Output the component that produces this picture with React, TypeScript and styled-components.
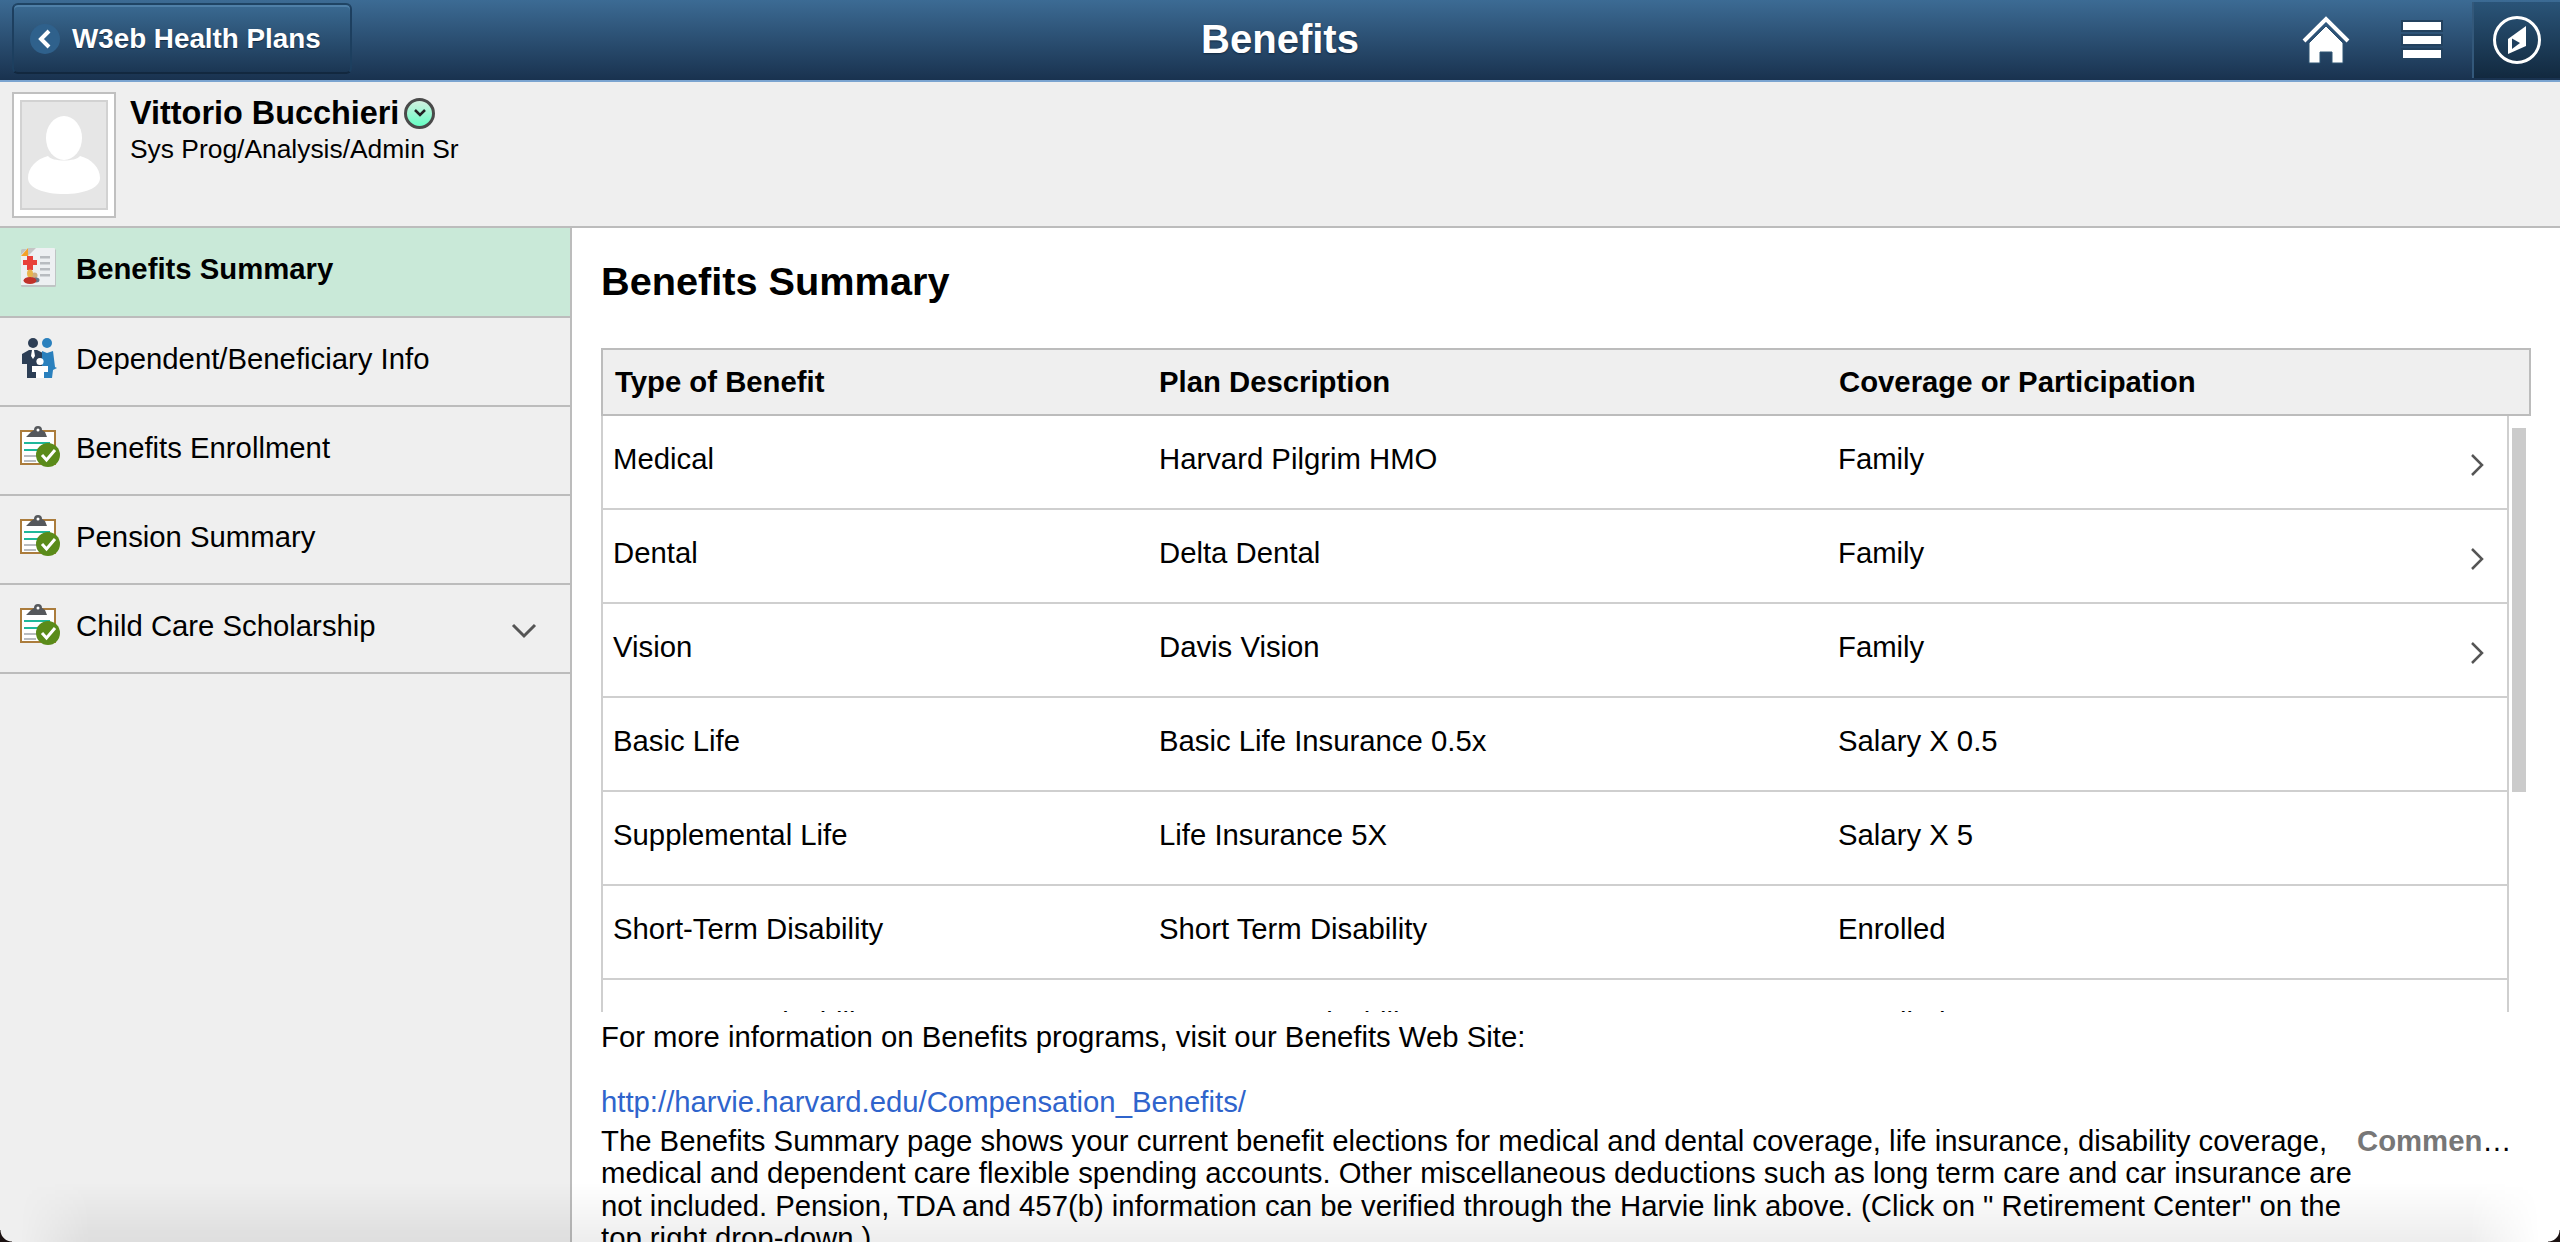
import React from "react";
import styled, { createGlobalStyle } from "styled-components";

const Global = createGlobalStyle`
  html, body { margin: 0; padding: 0; background: #fff; }
  body { font-family: "Liberation Sans", Arial, sans-serif; color: #000; }
`;

const Page = styled.div`
  position: relative;
  width: 2560px;
  height: 1242px;
  overflow: hidden;
  display: flex;
  flex-direction: column;
  background: #fff;
`;

const Header = styled.header`
  flex: none;
  height: 80px;
  border-bottom: 2px solid #7ba4d0;
  background: linear-gradient(#3c6b94, #19324f);
  display: grid;
  grid-template-columns: 1fr auto 1fr;
  align-items: stretch;
`;

const HeaderLeft = styled.div`
  display: flex;
  align-items: flex-start;
  padding: 3px 0 0 12px;
`;

const BackButton = styled.button`
  width: 340px;
  height: 71px;
  box-sizing: border-box;
  padding: 0 0 0 16px;
  display: flex;
  align-items: center;
  gap: 12px;
  border: 2px solid #1d3f5f;
  border-top-color: #1f4464;
  border-bottom-color: #12283f;
  border-radius: 6px;
  box-shadow: inset 0 2px 0 #4f80a8;
  background: linear-gradient(#3a6a92, #1b3653);
  color: #fff;
  font: bold 27.8px "Liberation Sans", Arial, sans-serif;
  text-shadow: 0 1px 1px #12283f;
`;

const BackCircle = styled.span`
  width: 30px;
  height: 30px;
  border-radius: 50%;
  background: #2f618c;
  display: flex;
  align-items: center;
  justify-content: center;
`;

const Title = styled.h1`
  margin: 0;
  align-self: center;
  position: relative;
  top: -1px;
  color: #fff;
  font-size: 40px;
  font-weight: bold;
  text-shadow: 0 1px 2px #12283f;
`;

const HeaderRight = styled.div`
  display: flex;
  justify-content: flex-end;
  align-items: stretch;
`;

const IconSlot = styled.div<{ $w: number; $mr: number }>`
  width: ${(p) => p.$w}px;
  margin-right: ${(p) => p.$mr}px;
  display: flex;
  align-items: center;
  justify-content: center;
`;

const HamburgerBox = styled.div`
  display: flex;
  flex-direction: column;
  gap: 6px;
`;

const Bar = styled.span`
  display: block;
  width: 38px;
  height: 8px;
  background: #fff;
  outline: 2px solid #23425f;
`;

const NavPanel = styled.div`
  width: 86px;
  margin: 2px 0;
  border-left: 2px solid #33587a;
  background: linear-gradient(#2a5478, #12293f);
  display: flex;
  align-items: center;
  justify-content: center;
`;

const Profile = styled.section`
  flex: none;
  height: 144px;
  border-bottom: 2px solid #bcbcbc;
  background: #efefef;
  box-sizing: content-box;
  display: flex;
  align-items: flex-start;
  padding: 0 0 0 12px;
  gap: 14px;
`;

const PhotoFrame = styled.div`
  margin-top: 10px;
  width: 104px;
  height: 126px;
  box-sizing: border-box;
  border: 2px solid #c0c0c0;
  background: #fff;
  padding: 6px;
`;

const PhotoInner = styled.div`
  width: 100%;
  height: 100%;
  box-sizing: border-box;
  border: 2px solid #d2d2d2;
  background: #e6e6e6;
  display: flex;
  align-items: center;
  justify-content: center;
`;

const ProfileText = styled.div`
  margin-top: 11px;
`;

const NameRow = styled.div`
  display: flex;
  align-items: center;
  gap: 5px;
  height: 40px;
`;

const Name = styled.span`
  font-size: 32.4px;
  font-weight: bold;
`;

const NameToggle = styled.span`
  width: 31px;
  height: 31px;
  box-sizing: border-box;
  border-radius: 50%;
  border: 3px solid #4a4a4a;
  background: linear-gradient(#d2f0e0, #66ffc4);
  display: flex;
  align-items: center;
  justify-content: center;
`;

const JobTitle = styled.div`
  font-size: 26.4px;
  line-height: 32px;
`;

const Body = styled.div`
  flex: 1;
  display: flex;
  min-height: 0;
`;

const Sidebar = styled.nav`
  flex: none;
  width: 570px;
  border-right: 2px solid #bcbcbc;
  background: #efefef;
`;

const NavItem = styled.div<{ $active?: boolean }>`
  height: ${(p) => (p.$active ? 90 : 89)}px;
  box-sizing: border-box;
  border-bottom: 2px solid #bcbcbc;
  background: ${(p) => (p.$active ? "#c9e9d8" : "#efefef")};
  font-size: 29.3px;
  font-weight: ${(p) => (p.$active ? "bold" : "normal")};
  display: flex;
  align-items: center;
  padding: 0 0 6px 10px;
`;

const NavIcon = styled.svg<{ $top?: number }>`
  flex: none;
  width: 60px;
  height: 60px;
  align-self: flex-start;
  margin: ${(p) => p.$top ?? 12}px 6px 0 0;
`;

const NavLabel = styled.span`
  flex: 1;
`;

const NavChevron = styled.svg`
  flex: none;
  width: 26px;
  height: 16px;
  margin: 10px 33px 0 0;
`;

const Main = styled.main`
  flex: 1;
  min-width: 0;
  padding-left: 29px;
  display: flex;
  flex-direction: column;
`;

const PageTitle = styled.h2`
  flex: none;
  height: 120px;
  margin: 0;
  box-sizing: border-box;
  padding-top: 30px;
  font-size: 39.7px;
  line-height: 46px;
  font-weight: bold;
`;

const TableArea = styled.div`
  flex: none;
  position: relative;
  height: 664px;
  overflow: hidden;
`;

const TableHead = styled.div`
  width: 1930px;
  height: 68px;
  box-sizing: border-box;
  border: 2px solid #bcbcbc;
  background: #efefef;
  display: grid;
  grid-template-columns: 544px 680px 1fr;
  align-items: center;
  padding-left: 12px;
  font-size: 29.3px;
  font-weight: bold;
`;

const TableBodyBox = styled.div`
  width: 1908px;
  box-sizing: border-box;
  border-left: 2px solid #cfcfcf;
  border-right: 2px solid #cfcfcf;
`;

const Row = styled.div`
  height: 94px;
  box-sizing: border-box;
  border-bottom: 2px solid #cfcfcf;
  display: grid;
  grid-template-columns: 546px 679px 1fr 60px;
  padding-left: 10px;
  font-size: 29.3px;
`;

const Cell = styled.div`
  padding-top: 25px;
  line-height: 36px;
`;

const RowChevron = styled.svg`
  width: 14px;
  height: 24px;
  margin: 37px 0 0 23px;
`;

const ScrollThumb = styled.div`
  position: absolute;
  top: 80px;
  left: 1911px;
  width: 14px;
  height: 364px;
  background: #cbcbcb;
`;

const Footer = styled.div`
  flex: none;
  font-size: 29.3px;
`;

const InfoLine = styled.div`
  height: 40px;
  line-height: 50px;
`;

const LinkLine = styled.a`
  display: block;
  margin-top: 29px;
  height: 41px;
  line-height: 42px;
  color: #2f64cc;
  text-decoration: none;
`;

const DescRow = styled.div`
  display: flex;
  align-items: flex-start;
  margin-top: 3px;
`;

const Description = styled.p`
  flex: none;
  width: 1756px;
  margin: 0;
  line-height: 32.3px;
`;

const CommentTag = styled.div`
  line-height: 32px;
  white-space: nowrap;
`;

const CommentWord = styled.span`
  color: #777;
  font-weight: bold;
`;

const BottomShade = styled.div`
  position: absolute;
  left: 0;
  right: 0;
  bottom: 0;
  height: 60px;
  pointer-events: none;
  background: linear-gradient(rgba(0, 0, 0, 0), rgba(0, 0, 0, 0.07));
  -webkit-mask-image: linear-gradient(90deg, transparent 20px, #000 90px, #000 calc(100% - 90px), transparent calc(100% - 20px));
  mask-image: linear-gradient(90deg, transparent 20px, #000 90px, #000 calc(100% - 90px), transparent calc(100% - 20px));
`;

const Corner = styled.div<{ $right?: boolean }>`
  position: absolute;
  bottom: 0;
  ${(p) => (p.$right ? "right: 0;" : "left: 0;")}
  width: 12px;
  height: 12px;
  pointer-events: none;
  background: radial-gradient(
    circle at ${(p) => (p.$right ? "0 0" : "100% 0")},
    transparent 11px,
    #1b1212 12px
  );
`;

const SummaryIcon = () => (
  <NavIcon viewBox="0 0 60 60">
    <rect x="11" y="9" width="35" height="38" rx="1.5" fill="#bfc4c4" />
    <path d="M18 8H44a1 1 0 0 1 1 1V45H11V15Z" fill="#edf0f2" />
    <path d="M11 16L18 8V16Z" fill="#f2a229" />
    <path d="M18 8L26 8L18 16Z" fill="#c5c5c5" />
    <path d="M17 16h6v4h4v5h-4v5h-6v-5h-4v-5h4z" fill="#e8403a" />
    <rect x="30" y="16" width="10" height="2.5" fill="#b8bcc0" />
    <rect x="30" y="22" width="10" height="2.5" fill="#b8bcc0" />
    <rect x="30" y="28" width="10" height="2.5" fill="#b8bcc0" />
    <rect x="30" y="34" width="10" height="2.5" fill="#b8bcc0" />
    <circle cx="24.5" cy="35.5" r="3" fill="#cfae80" />
    <ellipse cx="26" cy="40" rx="3.5" ry="2.5" fill="#64788c" />
    <ellipse cx="20" cy="33.5" rx="3" ry="4" fill="#e8b44c" />
    <ellipse cx="20" cy="40.5" rx="6.5" ry="3.5" fill="#c0322a" />
  </NavIcon>
);

const FamilyIcon = () => (
  <NavIcon viewBox="0 0 60 60">
    <circle cx="23" cy="13" r="5" fill="#2c3e55" />
    <circle cx="37" cy="13" r="5" fill="#2a80bd" />
    <path d="M12 24l7-4h8l6 3v25H17V34h-5Z" fill="#2c3e55" />
    <path d="M22 20h2l1 6-2 3-2-3Z" fill="#fff" />
    <path d="M32 21l5 2 6-2 2 16 2 1-4 2-1 8H32Z" fill="#2a80bd" />
    <circle cx="30" cy="31.5" r="3.6" fill="#fff" />
    <path d="M22 36h16v6h-4v6h-8v-6h-4Z" fill="#fff" />
  </NavIcon>
);

const EnrollIcon = () => (
  <NavIcon viewBox="0 0 60 60" $top={14}>
    <rect x="11" y="10" width="34" height="33" fill="#fff" stroke="#ab7c3c" strokeWidth="2" />
    <path d="M21 11l3-2a4 4 0 0 1 8 0l3 2 2 5H16Z" fill="#55585c" />
    <circle cx="28" cy="9" r="1.5" fill="#fff" />
    <rect x="14" y="21" width="26" height="2" fill="#1fb89a" />
    <rect x="14" y="28" width="18" height="2" fill="#1fb89a" />
    <rect x="14" y="34" width="14" height="2" fill="#b8bcc0" />
    <rect x="14" y="39" width="12" height="2" fill="#b8bcc0" />
    <circle cx="38" cy="34" r="12" fill="#5a8b1a" />
    <path d="M32 34l4.500 5L45 29" fill="none" stroke="#fff" strokeWidth="3" />
  </NavIcon>
);

const rows = [
  ["Medical", "Harvard Pilgrim HMO", "Family", true],
  ["Dental", "Delta Dental", "Family", true],
  ["Vision", "Davis Vision", "Family", true],
  ["Basic Life", "Basic Life Insurance 0.5x", "Salary X 0.5", false],
  ["Supplemental Life", "Life Insurance 5X", "Salary X 5", false],
  ["Short-Term Disability", "Short Term Disability", "Enrolled", false],
  ["Long-Term Disability", "Long Term Disability", "Enrolled", false],
] as const;

const navItems = [
  { label: "Dependent/Beneficiary Info", icon: <FamilyIcon /> },
  { label: "Benefits Enrollment", icon: <EnrollIcon /> },
  { label: "Pension Summary", icon: <EnrollIcon /> },
];

export default function App() {
  return (
    <Page>
      <Global />
      <Header>
        <HeaderLeft>
          <BackButton>
            <BackCircle>
              <svg width="16" height="20" viewBox="0 0 16 20">
                <path d="M12 2L4 10l8 8" fill="none" stroke="#fff" strokeWidth="4" />
              </svg>
            </BackCircle>
            W3eb Health Plans
          </BackButton>
        </HeaderLeft>
        <Title>Benefits</Title>
        <HeaderRight>
          <IconSlot $w={48} $mr={53}>
            <svg width="48" height="48" viewBox="0 0 48 48">
              <path d="M2 25L24 3l22 22" fill="none" stroke="#fff" strokeWidth="4" />
              <path d="M7 27L24 10l17 17v20H30V36H18v11H7Z" fill="#fff" stroke="#2f5473" strokeWidth="1" />
            </svg>
          </IconSlot>
          <IconSlot $w={38} $mr={31}>
            <HamburgerBox>
              <Bar />
              <Bar />
              <Bar />
            </HamburgerBox>
          </IconSlot>
          <NavPanel>
            <svg width="50" height="50" viewBox="0 0 50 50">
              <circle cx="25" cy="25" r="22.500" fill="none" stroke="#fff" strokeWidth="3" />
              <path d="M16 24L34 11V31L16 39Z" fill="#fff" />
              <path d="M20 23.500L28 28l-8 6Z" fill="#1f3f5e" />
            </svg>
          </NavPanel>
        </HeaderRight>
      </Header>

      <Profile>
        <PhotoFrame>
          <PhotoInner>
            <svg width="72" height="78" viewBox="0 2 72 78">
              <ellipse cx="36" cy="24" rx="18" ry="22" fill="#fff" />
              <path d="M20 42c4 6 28 6 32 0 12 3 20 12 20 22 0 10-16 16-36 16S0 74 0 64c0-10 8-19 20-22Z" fill="#fff" />
            </svg>
          </PhotoInner>
        </PhotoFrame>
        <ProfileText>
          <NameRow>
            <Name>Vittorio Bucchieri</Name>
            <NameToggle>
              <svg width="14" height="10" viewBox="0 0 14 10">
                <path d="M2 2l5 5 5-5" fill="none" stroke="#222" strokeWidth="2.500" />
              </svg>
            </NameToggle>
          </NameRow>
          <JobTitle>Sys Prog/Analysis/Admin Sr</JobTitle>
        </ProfileText>
      </Profile>

      <Body>
        <Sidebar>
          <NavItem $active>
            <SummaryIcon />
            <NavLabel>Benefits Summary</NavLabel>
          </NavItem>
          {navItems.map((item) => (
            <NavItem key={item.label}>
              {item.icon}
              <NavLabel>{item.label}</NavLabel>
            </NavItem>
          ))}
          <NavItem>
            <EnrollIcon />
            <NavLabel>Child Care Scholarship</NavLabel>
            <NavChevron viewBox="0 0 26 16">
              <path d="M2 2l11 11L24 2" fill="none" stroke="#555" strokeWidth="3" />
            </NavChevron>
          </NavItem>
        </Sidebar>

        <Main>
          <PageTitle>Benefits Summary</PageTitle>
          <TableArea>
            <TableHead>
              <span>Type of Benefit</span>
              <span>Plan Description</span>
              <span>Coverage or Participation</span>
            </TableHead>
            <TableBodyBox>
              {rows.map(([type, plan, coverage, more]) => (
                <Row key={type}>
                  <Cell>{type}</Cell>
                  <Cell>{plan}</Cell>
                  <Cell>{coverage}</Cell>
                  {more ? (
                    <RowChevron viewBox="0 0 14 24">
                      <path d="M2 2l10 10L2 22" fill="none" stroke="#555" strokeWidth="2.500" />
                    </RowChevron>
                  ) : (
                    <span />
                  )}
                </Row>
              ))}
            </TableBodyBox>
            <ScrollThumb />
          </TableArea>
          <Footer>
            <InfoLine>For more information on Benefits programs, visit our Benefits Web Site:</InfoLine>
            <LinkLine href="#">http://harvie.harvard.edu/Compensation_Benefits/</LinkLine>
            <DescRow>
              <Description>
                The Benefits Summary page shows your current benefit elections for medical and dental coverage, life
                insurance, disability coverage, medical and dependent care flexible spending accounts. Other
                miscellaneous deductions such as long term care and car insurance are not included. Pension, TDA and
                457(b) information can be verified through the Harvie link above. (Click on " Retirement Center" on
                the top right drop-down.)
              </Description>
              <CommentTag>
                <CommentWord>Commen</CommentWord>…
              </CommentTag>
            </DescRow>
          </Footer>
        </Main>
      </Body>
      <BottomShade />
      <Corner />
      <Corner $right />
    </Page>
  );
}
